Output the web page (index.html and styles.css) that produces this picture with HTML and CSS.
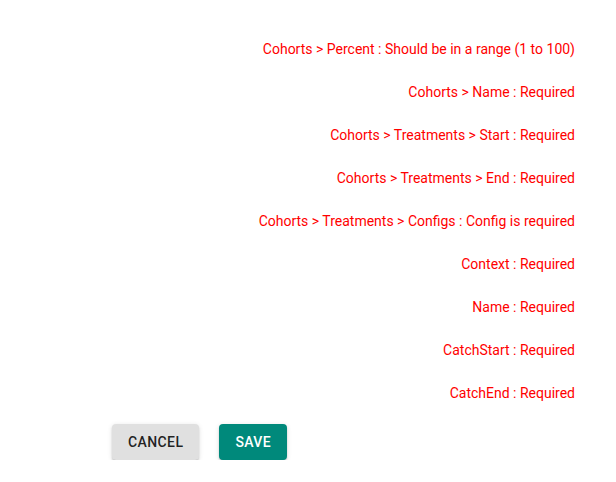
FILE: index.html
```html
<!DOCTYPE html>
<html>
<head>
<meta charset="utf-8">
<link rel="stylesheet" href="styles.css">
</head>
<body>
<div class="page">
  <div class="errors">
    <div class="err">Cohorts &gt; Percent : Should be in a range (1 to 100)</div>
    <div class="err">Cohorts &gt; Name : Required</div>
    <div class="err">Cohorts &gt; Treatments &gt; Start : Required</div>
    <div class="err">Cohorts &gt; Treatments &gt; End : Required</div>
    <div class="err">Cohorts &gt; Treatments &gt; Configs : Config is required</div>
    <div class="err">Context : Required</div>
    <div class="err">Name : Required</div>
    <div class="err">CatchStart : Required</div>
    <div class="err">CatchEnd : Required</div>
  </div>
  <div class="actions">
    <button class="btn btn-cancel">Cancel</button>
    <button class="btn btn-save">Save</button>
  </div>
</div>
</body>
</html>
```
FILE: styles.css
```css
html, body {
  margin: 0;
  padding: 0;
  background: #fff;
}
.page {
  font-family: Roboto, "Liberation Sans", sans-serif;
  padding-top: 39px;
}
.errors {
  display: flex;
  flex-direction: column;
  align-items: flex-end;
  padding-right: 41px;
  gap: 23px;
}
.err {
  color: #ff0000;
  font-size: 14px;
  line-height: 20px;
}
.actions {
  display: flex;
  gap: 20px;
  margin-top: 21px;
  padding-left: 112px;
}
.btn {
  font-family: Roboto, "Liberation Sans", sans-serif;
  font-size: 14px;
  font-weight: 500;
  letter-spacing: 0.02857em;
  text-transform: uppercase;
  height: 36px;
  padding: 0 16px;
  border: none;
  border-radius: 4px;
  box-shadow: 0 3px 1px -2px rgba(0,0,0,0.2), 0 2px 2px 0 rgba(0,0,0,0.14), 0 1px 5px 0 rgba(0,0,0,0.12);
}
.btn-cancel {
  background: #e0e0e0;
  color: rgba(0,0,0,0.87);
}
.btn-save {
  background: #00897b;
  color: #fff;
}
```
